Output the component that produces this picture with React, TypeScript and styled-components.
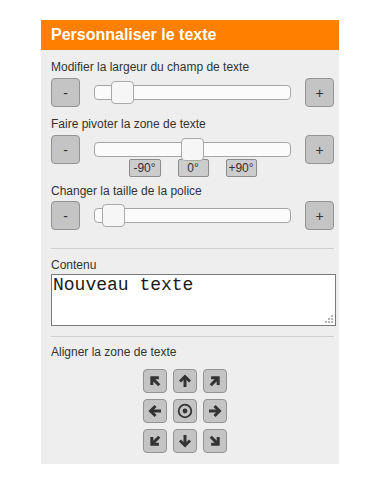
import React, { useEffect, useRef } from "react";
import styled, { createGlobalStyle } from "styled-components";

const GlobalStyle = createGlobalStyle`
  html, body {
    margin: 0;
    padding: 0;
    background: #ffffff;
    font-family: "Liberation Sans", Arial, sans-serif;
  }
`;

const Panel = styled.div`
  width: 298px;
  margin: 20px 0 0 41px;
  background: #eeeeee;
  padding-bottom: 11px;
`;

const Header = styled.div`
  height: 30px;
  display: flex;
  align-items: center;
  padding-left: 10px;
  background: #ff7f00;
  color: #ffffff;
  font-size: 16px;
  font-weight: bold;
`;

const Body = styled.div`
  padding: 10px 5px 0 10px;
`;

const Label = styled.div<{ $gap?: number }>`
  font-size: 12px;
  line-height: 14px;
  color: #333;
  margin-bottom: ${(p) => (p.$gap !== undefined ? p.$gap : 4)}px;
`;

const SliderRow = styled.div<{ $after: number }>`
  display: flex;
  align-items: flex-start;
  justify-content: space-between;
  margin-bottom: ${(p) => p.$after}px;
`;

const StepButton = styled.button`
  width: 29px;
  height: 29px;
  flex: none;
  padding: 0;
  background: #c4c4c4;
  border: 1px solid #939393;
  border-radius: 4px;
  color: #333;
  font-family: "Liberation Sans", Arial, sans-serif;
  font-size: 14px;
`;

const SliderCol = styled.div`
  flex: 1;
  margin: 0 14px;
  padding-top: 7px;
`;

const Track = styled.div`
  position: relative;
  height: 15px;
  box-sizing: border-box;
  background: #fbfbfb;
  border: 1px solid #a6a6a6;
  border-radius: 4px;
`;

const Handle = styled.div`
  position: absolute;
  top: -5px;
  width: 23px;
  height: 23px;
  box-sizing: border-box;
  background: #f6f6f6;
  border: 1px solid #a9a9a9;
  border-radius: 4px;
`;

const DegreeRow = styled.div`
  display: flex;
  justify-content: center;
  gap: 17px;
  margin-top: 2px;
`;

const DegreeButton = styled.button<{ $w?: number }>`
  height: 18px;
  width: ${(p) => p.$w ?? 31}px;
  padding: 0;
  background: #cccccc;
  border: 1px solid #8c8c8c;
  border-radius: 2px;
  color: #333;
  font-family: "Liberation Sans", Arial, sans-serif;
  font-size: 12px;
  line-height: 16px;
`;

const Separator = styled.hr<{ $top: number; $bottom: number }>`
  border: none;
  border-top: 1px solid #cfcfcf;
  margin: ${(p) => p.$top}px 0 ${(p) => p.$bottom}px 0;
`;

const TextWrap = styled.div`
  position: relative;
  width: 285px;
`;

const TextBox = styled.textarea`
  display: block;
  width: 285px;
  height: 52px;
  box-sizing: border-box;
  margin: 0;
  padding: 0 1px;
  border: 1px solid #7a7a7a;
  background: #ffffff;
  font-family: "Liberation Mono", "Courier New", monospace;
  font-size: 18px;
  line-height: 20px;
  color: #1a1a1a;
  outline: none;
  resize: none;
  caret-color: #000;
`;

const Grip = styled.svg`
  position: absolute;
  right: 3px;
  bottom: 3px;
`;

const AlignGrid = styled.div`
  display: grid;
  grid-template-columns: repeat(3, 24px);
  grid-auto-rows: 24px;
  gap: 6px;
  margin: 10px 0 0 92px;
`;

const AlignButton = styled.button`
  width: 24px;
  height: 24px;
  padding: 0;
  display: flex;
  align-items: center;
  justify-content: center;
  background: #c4c4c4;
  border: 1px solid #939393;
  border-radius: 4px;
`;

const Arrow = ({ angle }: { angle: number }) => (
  <svg width="14" height="14" viewBox="0 0 14 14">
    <g transform={`rotate(${angle} 7 7)`} stroke="#333" strokeWidth="3" fill="none" strokeLinejoin="miter">
      <line x1="7" y1="3" x2="7" y2="13" />
      <polyline points="2,7.5 7,2.5 12,7.5" />
    </g>
  </svg>
);

const Target = () => (
  <svg width="16" height="16" viewBox="0 0 16 16">
    <circle cx="8" cy="8" r="6.3" stroke="#333" strokeWidth="1.8" fill="none" />
    <circle cx="8" cy="8" r="2.4" fill="#333" />
  </svg>
);

const Slider = ({ pos }: { pos: number }) => (
  <Track>
    <Handle style={{ left: pos }} />
  </Track>
);

const gripDots = [
  [6, 0],
  [3, 3],
  [6, 3],
  [0, 6],
  [3, 6],
  [6, 6],
];

const aligns = [-45, 0, 45, -90, null, 90, -135, 180, 135];

export default function App() {
  const ref = useRef<HTMLTextAreaElement>(null);
  useEffect(() => {
    const el = ref.current;
    if (el) {
      el.focus();
      el.setSelectionRange(el.value.length, el.value.length);
    }
  }, []);

  return (
    <>
      <GlobalStyle />
      <Panel>
        <Header>Personnaliser le texte</Header>
        <Body>
          <Label>Modifier la largeur du champ de texte</Label>
          <SliderRow $after={10}>
            <StepButton>-</StepButton>
            <SliderCol>
              <Slider pos={16} />
            </SliderCol>
            <StepButton>+</StepButton>
          </SliderRow>

          <Label>Faire pivoter la zone de texte</Label>
          <SliderRow $after={7}>
            <StepButton>-</StepButton>
            <SliderCol>
              <Slider pos={86} />
              <DegreeRow>
                <DegreeButton $w={32}>-90°</DegreeButton>
                <DegreeButton>0°</DegreeButton>
                <DegreeButton>+90°</DegreeButton>
              </DegreeRow>
            </SliderCol>
            <StepButton>+</StepButton>
          </SliderRow>

          <Label $gap={3}>Changer la taille de la police</Label>
          <SliderRow $after={0}>
            <StepButton>-</StepButton>
            <SliderCol>
              <Slider pos={7} />
            </SliderCol>
            <StepButton>+</StepButton>
          </SliderRow>

          <Separator $top={18} $bottom={9} />
          <Label $gap={2}>Contenu</Label>
          <TextWrap>
            <TextBox ref={ref} defaultValue="Nouveau texte" spellCheck={false} />
            <Grip width="8" height="8" viewBox="0 0 8 8">
              {gripDots.map(([x, y], i) => (
                <rect key={i} x={x} y={y} width="2" height="2" fill="#b5b5b5" />
              ))}
            </Grip>
          </TextWrap>

          <Separator $top={10} $bottom={8} />
          <Label $gap={0}>Aligner la zone de texte</Label>
          <AlignGrid>
            {aligns.map((a, i) => (
              <AlignButton key={i}>{a === null ? <Target /> : <Arrow angle={a} />}</AlignButton>
            ))}
          </AlignGrid>
        </Body>
      </Panel>
    </>
  );
}
